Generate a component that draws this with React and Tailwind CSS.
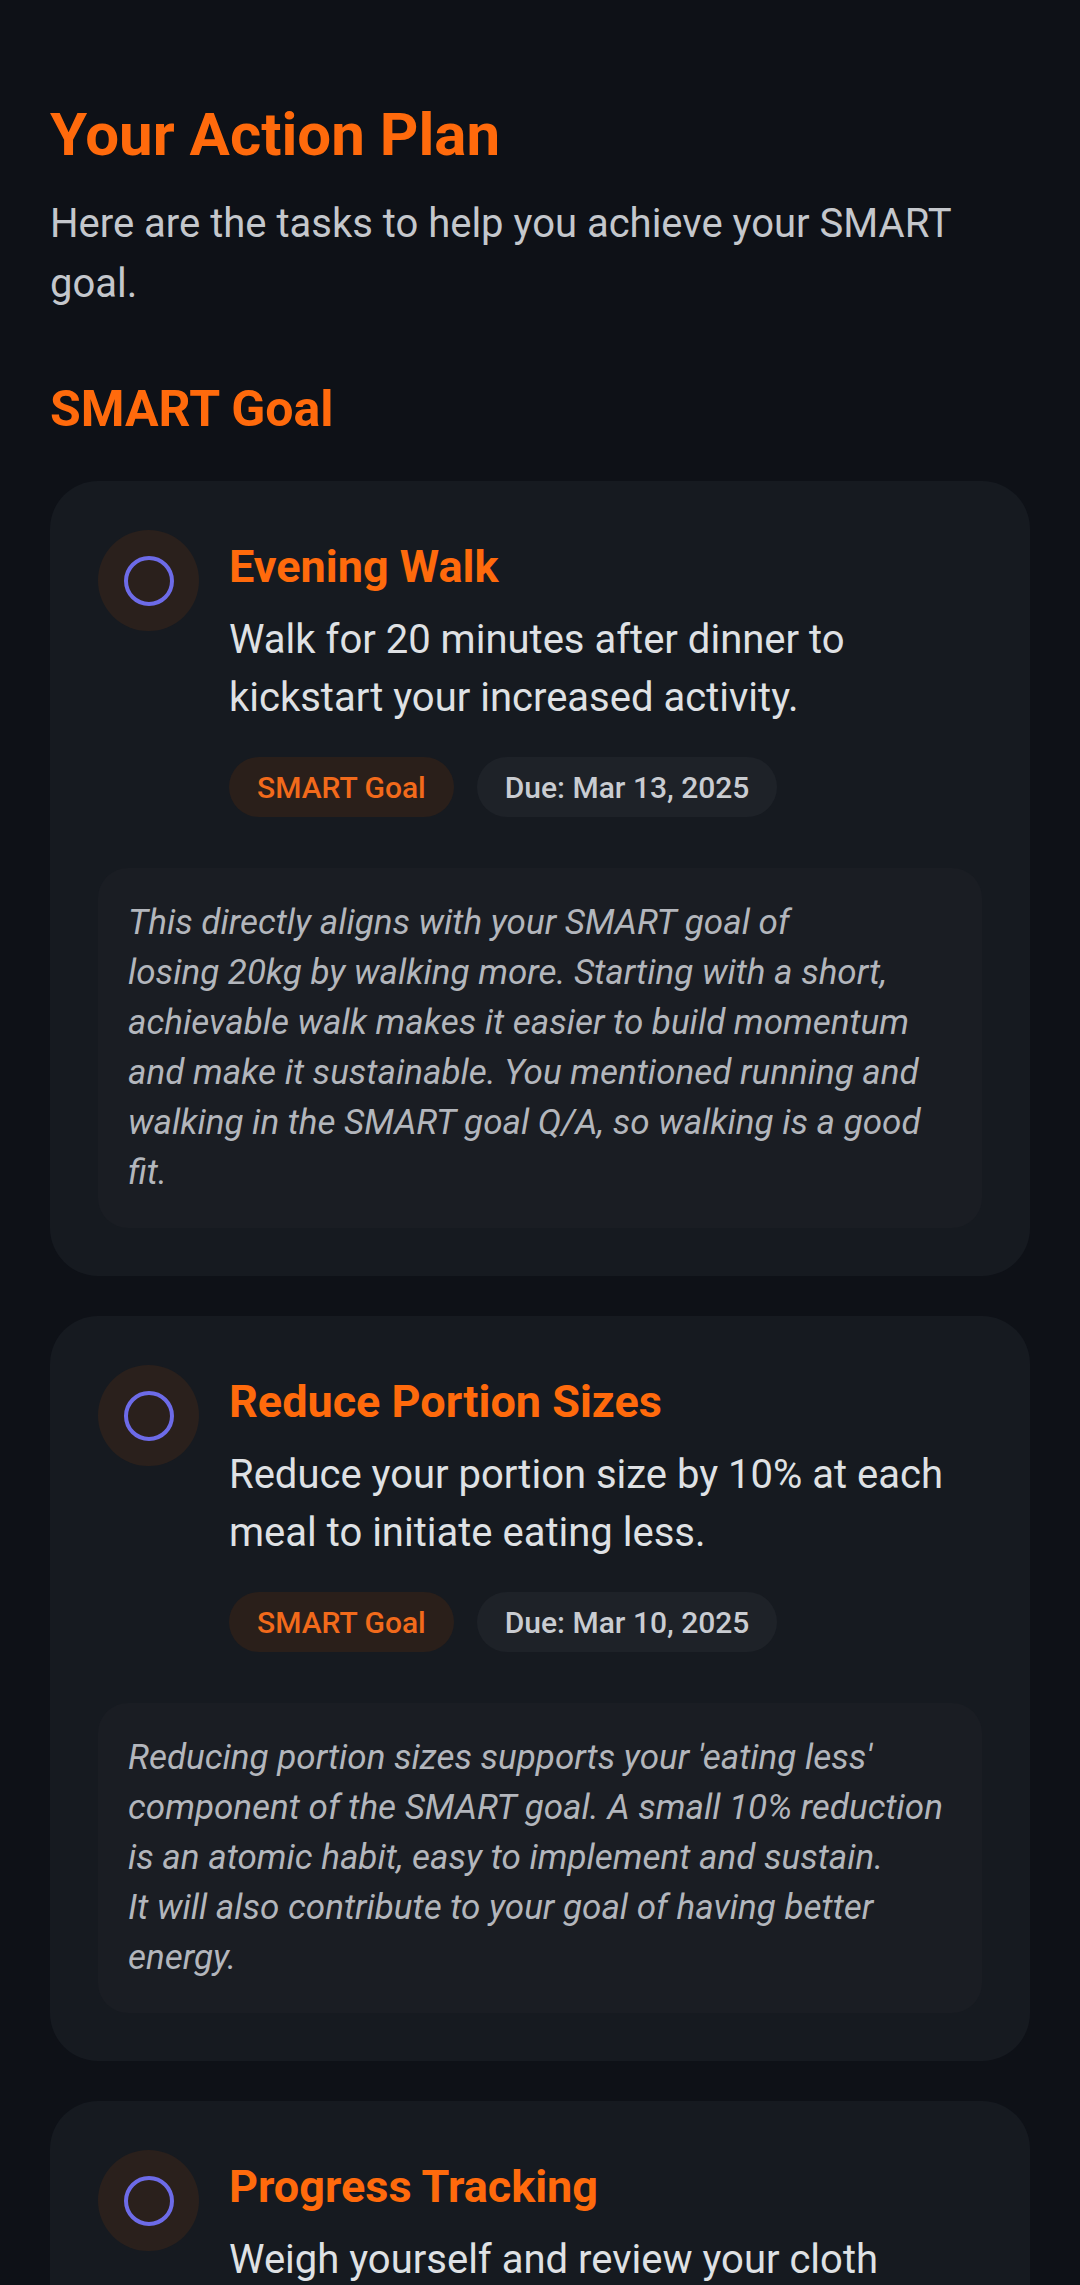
const tasks = [
  {
    title: "Evening Walk",
    body: "Walk for 20 minutes after dinner to kickstart your increased activity.",
    due: "Due: Mar 13, 2025",
    why: "This directly aligns with your SMART goal of\nlosing 20kg by walking more. Starting with a short, achievable walk makes it easier to build momentum and make it sustainable. You mentioned running and walking in the SMART goal Q/A, so walking is a good fit.",
  },
  {
    title: "Reduce Portion Sizes",
    body: "Reduce your portion size by 10% at each meal to initiate eating less.",
    due: "Due: Mar 10, 2025",
    why: "Reducing portion sizes supports your 'eating less' component of the SMART goal. A small 10% reduction is an atomic habit, easy to implement and sustain.\nIt will also contribute to your goal of having better energy.",
  },
  {
    title: "Progress Tracking",
    body: "Weigh yourself and review your cloth measurements once a week to see your progress.",
    due: "Due: Mar 16, 2025",
    why: "Tracking your weight every week keeps the SMART goal measurable and shows you how the small daily changes add up over time.",
  },
];

function TaskCard({ task }) {
  return (
    <div className="bg-[#161a20] rounded-[48px] p-12">
      <div className="flex gap-[30px]">
        {/* check circle */}
        <div className="mt-[1px] w-[101px] h-[101px] shrink-0 rounded-full bg-[#2a201c] flex items-center justify-center">
          <div className="w-[50px] h-[50px] rounded-full border-[4px] border-[#6d6be8]" />
        </div>

        <div className="flex-1 pt-[10px]">
          <h3 className="text-[45px] leading-[56px] font-bold text-[#ff6a0c]">
            {task.title}
          </h3>
          <p className="mt-[16px] text-[40px] leading-[58px] text-[#dfe1e4]">
            {task.body}
          </p>
          <div className="mt-[30px] flex gap-[23px]">
            <span className="h-[60px] px-[28px] rounded-full bg-[#2a1f1a] text-[#f26a1b] text-[30px] font-medium flex items-center">
              SMART Goal
            </span>
            <span className="h-[60px] px-[28px] rounded-full bg-[#1e2228] text-[#c9ccd1] text-[30px] font-medium flex items-center">
              {task.due}
            </span>
          </div>
        </div>
      </div>

      {/* reasoning */}
      <div className="mt-[51px] bg-[#1a1d23] rounded-[30px] p-[30px]">
        <p className="text-[35px] leading-[50px] italic text-[#b3b6bc] whitespace-pre-line">
          {task.why}
        </p>
      </div>
    </div>
  );
}

export default function App() {
  return (
    <div className="min-h-screen bg-[#0e1117] px-[50px] pt-[99px] pb-20 font-['Roboto',sans-serif]">
      <h1 className="text-[60px] leading-[72px] font-bold text-[#ff6a0c]">
        Your Action Plan
      </h1>
      <p className="mt-[23px] text-[40px] leading-[60px] text-[#c4c7cc]">
        Here are the tasks to help you achieve your SMART goal.
      </p>

      <h2 className="mt-[63px] text-[50px] leading-[64px] font-bold text-[#ff6a0c]">
        SMART Goal
      </h2>

      <div className="mt-[40px] flex flex-col gap-[40px]">
        {tasks.map((t) => (
          <TaskCard key={t.title} task={t} />
        ))}
      </div>
    </div>
  );
}
